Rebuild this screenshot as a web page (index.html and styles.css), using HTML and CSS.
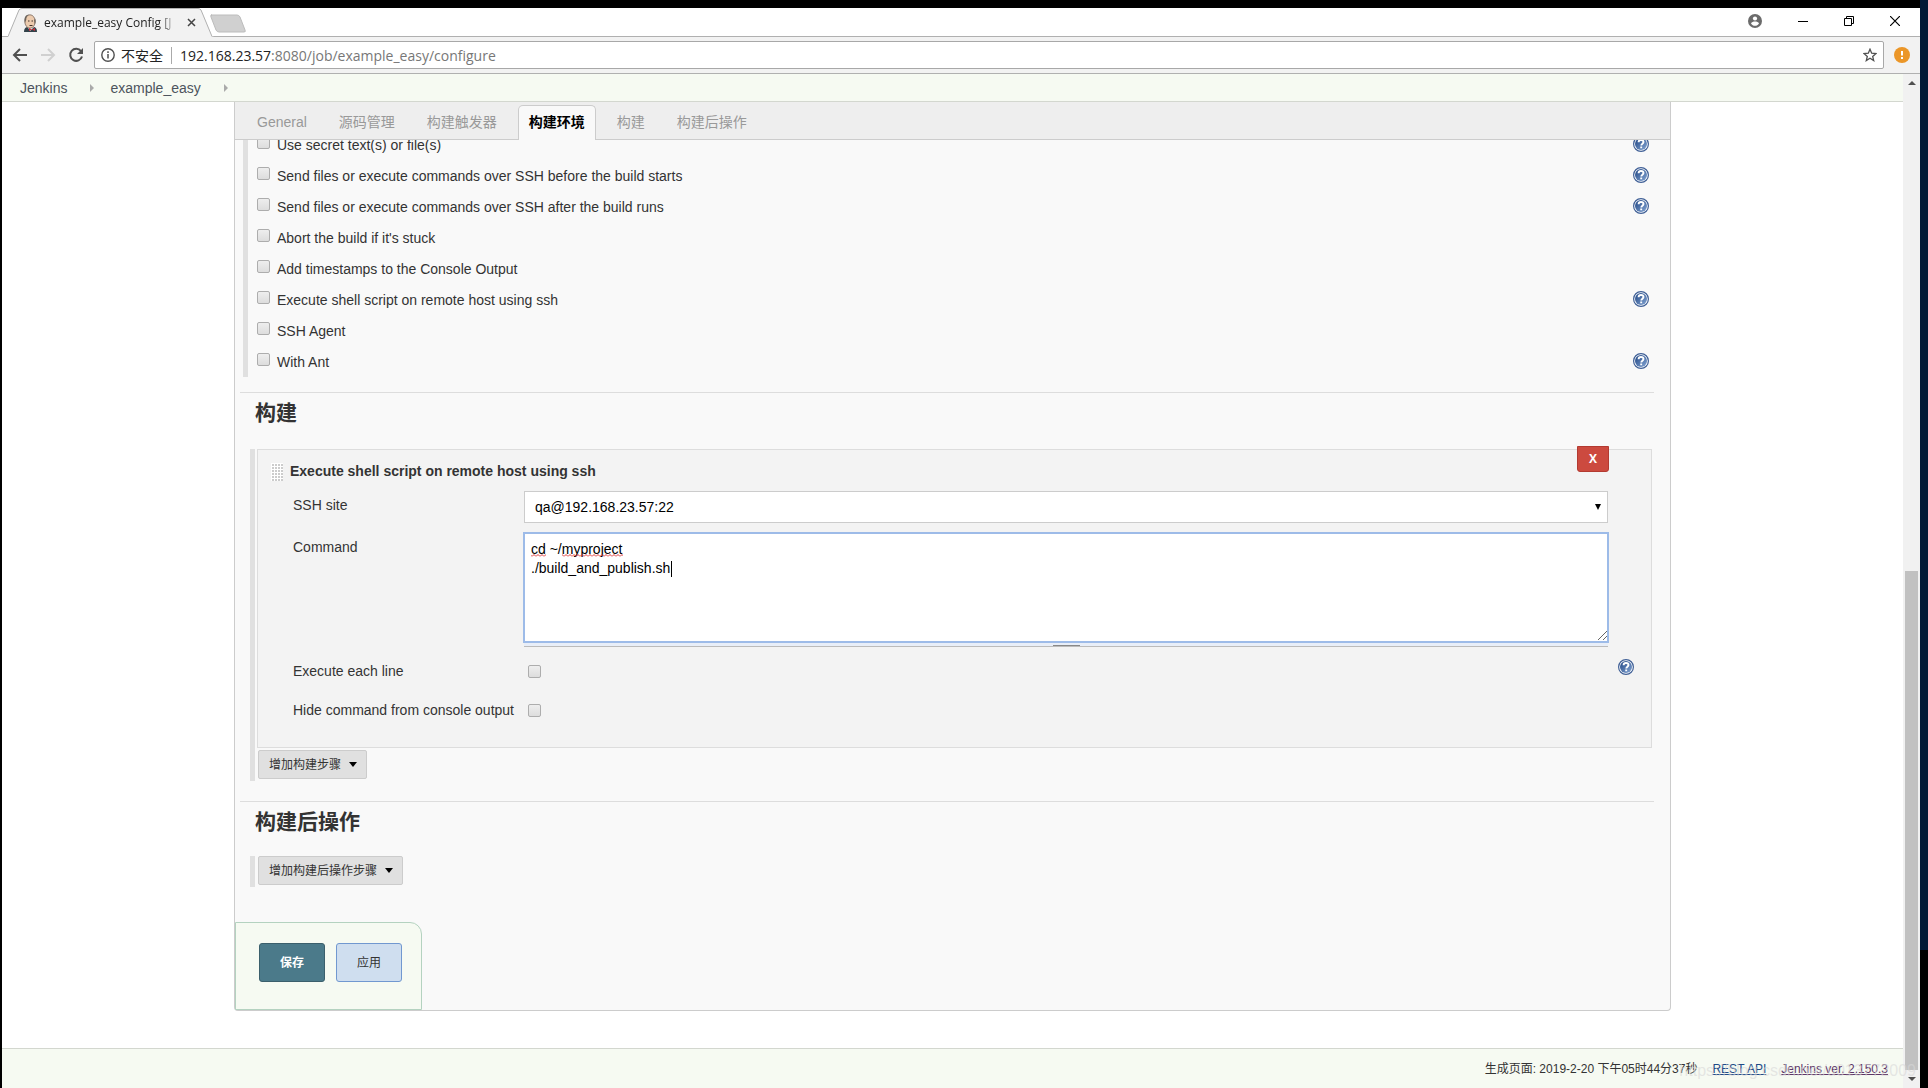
FILE: index.html
```html
<!DOCTYPE html>
<html lang="zh-CN">
<head>
<meta charset="utf-8">
<title>example_easy Config [Jenkins]</title>
<link rel="stylesheet" href="styles.css">
</head>
<body>
<svg class="defs" aria-hidden="true">
  <defs>
    <linearGradient id="help-fill" x1="0" y1="0" x2="1" y2="1">
      <stop offset="0" stop-color="#1f4583"/>
      <stop offset="1" stop-color="#85a6d4"/>
    </linearGradient>
    <pattern id="squiggle" width="4" height="3" patternUnits="userSpaceOnUse">
      <path d="M0 2.500L2 .5l2 2" fill="none" stroke="#d33"/>
    </pattern>
    <symbol id="help" viewBox="0 0 16 16">
      <circle cx="8" cy="8" r="7.4" fill="#fff" stroke="#3f5f96" stroke-width="1.2"/>
      <circle cx="8" cy="8" r="6" fill="url(#help-fill)"/>
      <path d="M5.600 6.200C5.600 4.800 6.700 4 8 4s2.500.8 2.500 2.100c0 1.500-2.200 1.700-2.200 3.300M8.200 10.500v1.800" fill="none" stroke="#fff" stroke-width="1.900"/>
    </symbol>
    <symbol id="chevron" viewBox="0 0 6 10">
      <path d="M1 1l4 4-4 4z" fill="#aaa"/>
    </symbol>
    <symbol id="caret" viewBox="0 0 8 5">
      <path d="M0 0h8L4 5z" fill="#000"/>
    </symbol>
  </defs>
</svg>
<div class="window">
  <header class="tabstrip">
    <div class="browser-tab">
      <svg class="tab-shape" viewBox="0 0 206 29" aria-hidden="true">
        <path d="M0 28.500L11 2Q12 .5 14 .5H190Q192 .5 193 2L204 28.500L206 29H0z" fill="#f2f2f2"/>
        <path d="M0 28.500L11 2Q12 .5 14 .5H190Q192 .5 193 2L204 28.500" fill="none" stroke="#b0b0b0"/>
      </svg>
      <svg class="favicon" viewBox="0 0 16 18" aria-hidden="true">
        <path d="M2 18c0-4 2-5 4-5h5c3 0 4 2 4 5z" fill="#33424a"/>
        <path d="M5 12l3 5 4-4z" fill="#fff"/>
        <ellipse cx="8" cy="7.500" rx="5.200" ry="6.700" fill="#eccbae" stroke="#7a675a" stroke-width=".8"/>
        <path d="M3 9C1.500 4 3.500.6 7.500.6c-2 1-3.500 2.400-3.200 4.900zM13 4.500c1 2 .8 4-.2 6l-.8-4z" fill="#6b635c"/>
        <path d="M6 7h1.500M9.500 7H11M7.500 11.500h3" stroke="#40302a" fill="none"/>
        <path d="M7 14l3 1.500L7 17zM13 14l-3 1.500 3 1.500z" fill="#c8313c"/>
      </svg>
      <span class="tab-title">example_easy Config [J</span>
      <button class="tab-close" aria-label="Close tab"><svg viewBox="0 0 9 9"><path d="M1 1l7 7M8 1L1 8" stroke="#444" stroke-width="1.500"/></svg></button>
    </div>
    <button class="new-tab" aria-label="New tab"><svg viewBox="0 0 36 19"><path d="M1 1h26q2 0 3 2l5 13q1 2-1 2H9q-2 0-3-2L1 3q-1-2 1-2z" fill="#d0d0d0" stroke="#bcbcbc"/></svg></button>
    <div class="window-controls">
      <svg class="account" viewBox="0 0 14 14"><circle cx="7" cy="7" r="7" fill="#6b6b6b"/><circle cx="7" cy="4.500" r="2.100" fill="#fff"/><path d="M3 9.500c.6-1.600 2.400-2 4-2s3.400.4 4 2c-1 1.500-2.400 2.300-4 2.300S4 11 3 9.500z" fill="#fff"/></svg>
      <button aria-label="Minimize"><svg viewBox="0 0 10 10"><path d="M0 5.500h10" stroke="#000"/></svg></button>
      <button aria-label="Restore"><svg viewBox="0 0 10 10"><path d="M.5 2.500h7v7h-7zM2.500 2.500v-2h7v7h-2" fill="none" stroke="#000"/></svg></button>
      <button aria-label="Close"><svg viewBox="0 0 10 10"><path d="M0 0l10 10M10 0L0 10" stroke="#000" stroke-width="1.200"/></svg></button>
    </div>
  </header>
  <nav class="toolbar" aria-label="Browser">
    <button aria-label="Back"><svg viewBox="0 0 16 16"><path d="M15 8H2M8 2L2 8l6 6" fill="none" stroke="#505050" stroke-width="2"/></svg></button>
    <button aria-label="Forward"><svg viewBox="0 0 16 16"><path d="M1 8h13M8 2l6 6-6 6" fill="none" stroke="#d0d0d0" stroke-width="2"/></svg></button>
    <button aria-label="Reload"><svg viewBox="0 0 16 16"><path d="M13 4.200A6 6 0 1 0 14 9.500" fill="none" stroke="#505050" stroke-width="2"/><path d="M15 1v6H9z" fill="#505050"/></svg></button>
    <div class="omnibox">
      <svg class="info" viewBox="0 0 14 14"><circle cx="7" cy="7" r="6.200" fill="none" stroke="#505050" stroke-width="1.400"/><path d="M7 6v4.500M7 3.300v1.600" stroke="#505050" stroke-width="1.500"/></svg>
      <span class="insecure">不安全</span>
      <span class="url"><b>192.168.23.57</b>:8080/job/example_easy/configure</span>
      <svg class="star" viewBox="0 0 14 14"><path d="M7 1.200l1.700 4 4.300.4-3.300 2.800 1 4.200L7 10.300l-3.700 2.300 1-4.200L1 5.600l4.300-.4z" fill="none" stroke="#505050" stroke-width="1.300"/></svg>
    </div>
    <svg class="alert" viewBox="0 0 16 16"><circle cx="8" cy="8" r="8" fill="#eb9628"/><path d="M8 4v4.500M8 10v2" stroke="#fff" stroke-width="2"/></svg>
  </nav>
  <div class="viewport">
    <div class="page">
      <nav class="breadcrumbs" aria-label="Breadcrumb">
        <a href="#">Jenkins</a><svg class="chevron"><use href="#chevron"/></svg>
        <a href="#">example_easy</a><svg class="chevron"><use href="#chevron"/></svg>
      </nav>
      <main class="config">
        <div class="tabs">
          <a href="#">General</a>
          <a href="#">源码管理</a>
          <a href="#">构建触发器</a>
          <a href="#" class="active">构建环境</a>
          <a href="#">构建</a>
          <a href="#">构建后操作</a>
        </div>
        <section class="environment">
          <div class="option"><label><input type="checkbox">Use secret text(s) or file(s)</label><svg class="help"><use href="#help"/></svg></div>
          <div class="option"><label><input type="checkbox">Send files or execute commands over SSH before the build starts</label><svg class="help"><use href="#help"/></svg></div>
          <div class="option"><label><input type="checkbox">Send files or execute commands over SSH after the build runs</label><svg class="help"><use href="#help"/></svg></div>
          <div class="option"><label><input type="checkbox">Abort the build if it's stuck</label></div>
          <div class="option"><label><input type="checkbox">Add timestamps to the Console Output</label></div>
          <div class="option"><label><input type="checkbox">Execute shell script on remote host using ssh</label><svg class="help"><use href="#help"/></svg></div>
          <div class="option"><label><input type="checkbox">SSH Agent</label></div>
          <div class="option"><label><input type="checkbox">With Ant</label><svg class="help"><use href="#help"/></svg></div>
        </section>
        <section class="section build">
          <h2>构建</h2>
          <div class="steps">
            <div class="step">
              <button class="delete">X</button>
              <h3><span class="handle"></span>Execute shell script on remote host using ssh</h3>
              <div class="field">
                <label for="site">SSH site</label>
                <div class="select-wrap">
                  <select id="site"><option>qa@192.168.23.57:22</option></select>
                  <svg class="select-arrow" viewBox="0 0 6 6"><path d="M0 0h6L3 6z"/></svg>
                </div>
              </div>
              <div class="field">
                <label for="command">Command</label>
                <div class="editor">
                  <textarea class="command" id="command" spellcheck="false">cd ~/myproject
./build_and_publish.sh</textarea>
                  <svg class="marks" viewBox="0 0 160 50" aria-hidden="true">
                    <path d="M7 21h15v3H7zM38 21h61v3H38z" fill="url(#squiggle)"/>
                    <path d="M147 28h1v16h-1z"/>
                  </svg>
                  <svg class="grip" viewBox="0 0 9 9"><path d="M0 9l9-9M5 9l4-4" stroke="#666"/></svg>
                  <div class="resizer"><span></span></div>
                </div>
              </div>
              <div class="field check">
                <label for="each">Execute each line</label>
                <input type="checkbox" id="each">
                <svg class="help"><use href="#help"/></svg>
              </div>
              <div class="field check">
                <label for="hide">Hide command from console output</label>
                <input type="checkbox" id="hide">
              </div>
            </div>
            <button class="add">增加构建步骤<svg class="caret"><use href="#caret"/></svg></button>
          </div>
        </section>
        <section class="section">
          <h2>构建后操作</h2>
          <div class="steps">
            <button class="add">增加构建后操作步骤<svg class="caret"><use href="#caret"/></svg></button>
          </div>
        </section>
        <div class="actions">
          <button class="save">保存</button>
          <button class="apply">应用</button>
        </div>
      </main>
      <footer class="footer">
        <span>生成页面: 2019-2-20 下午05时44分37秒</span>
        <a href="#">REST API</a>
        <a href="#" class="visited">Jenkins ver. 2.150.3</a>
      </footer>
    </div>
    <div class="scrollbar">
      <svg viewBox="0 0 8 4"><path d="M0 4h8L4 0z" fill="#505050"/></svg>
      <div class="track"><div class="thumb"></div></div>
      <svg viewBox="0 0 8 4"><path d="M0 0h8L4 4z" fill="#505050"/></svg>
    </div>
  </div>
  <div class="watermark">https://blog.csdn.net/u013772009</div>
</div>
</body>
</html>
```
FILE: styles.css
```css
* { box-sizing: border-box; }

html, body { height: 100%; }

body {
  margin: 0;
  padding: 8px 8px 0 2px;
  background: linear-gradient(to left, #021a36 8px, #000 8px) no-repeat 0 0 / 100% 950px, #000;
  color: #333;
  font: 14px/19px "Liberation Sans", "Noto Sans CJK SC", sans-serif;
}

button { padding: 0; border: 0; background: none; font-family: inherit; }
button svg { display: block; }
svg { flex: none; }
.defs { position: absolute; width: 0; height: 0; }

.window {
  position: relative;
  display: flex;
  flex-direction: column;
  min-height: 100%;
  background: #fff;
}

/* Browser chrome */
.tabstrip {
  display: flex;
  height: 29px;
  padding-left: 6px;
  border-bottom: 1px solid #b0b0b0;
  background: #fff;
  font-family: "Open Sans", sans-serif;
}
.browser-tab {
  position: relative;
  display: flex;
  align-items: center;
  width: 206px;
  height: 29px;
  padding: 0 18px 0 14px;
}
.tab-shape { position: absolute; inset: 0; width: 206px; height: 29px; }
.favicon { position: relative; width: 16px; height: 18px; }
.tab-title {
  position: relative;
  flex: 1;
  margin-left: 6px;
  overflow: hidden;
  color: #222;
  font-size: 12px;
  white-space: nowrap;
  -webkit-mask-image: linear-gradient(to left, transparent, #000 18px);
  mask-image: linear-gradient(to left, transparent, #000 18px);
}
.tab-close { position: relative; width: 9px; margin-left: 10px; }
.new-tab { width: 36px; margin: 2px 0 0 -4px; }
.window-controls { display: flex; align-items: center; gap: 36px; margin-left: auto; padding: 0 20px 2px 0; }
.window-controls button { width: 10px; }
.window-controls .account { width: 14px; height: 14px; }

.toolbar {
  display: flex;
  align-items: center;
  gap: 12px;
  height: 37px;
  padding: 0 10px;
  border-bottom: 1px solid #b0b0b0;
  background: #f2f2f2;
}
.toolbar button { width: 16px; }
.omnibox {
  display: flex;
  flex: 1;
  align-items: center;
  height: 28px;
  margin: 0 -2px;
  padding: 0 6px;
  border: 1px solid #a8a8a8;
  border-radius: 2px;
  background: #fff;
  font-family: "Open Sans", "Noto Sans CJK SC", sans-serif;
}
.info { width: 14px; height: 14px; }
.insecure { margin-left: 6px; padding-right: 8px; border-right: 1px solid #aaa; color: #222; line-height: 17px; }
.url { flex: 1; margin-left: 8px; color: #777; }
.url b { color: #222; font-weight: 400; }
.star { width: 14px; height: 14px; }
.alert { width: 16px; height: 16px; }

.viewport { display: flex; flex: 1; }
.page { display: flex; flex: 1; flex-direction: column; }

.breadcrumbs {
  display: flex;
  align-items: center;
  height: 28px;
  padding: 1px 0 0 18px;
  border-bottom: 1px solid #d3d7cf;
  background: #f6faf2;
}
.breadcrumbs a { color: #4d545d; text-decoration: none; }
.chevron { width: 6px; height: 10px; margin: 0 15px 0 22px; }

/* Configuration form */
.config {
  display: flex;
  flex-direction: column;
  margin: 0 232px;
  border: 1px solid #ccc;
  border-top: 0;
  border-radius: 0 0 4px 4px;
  background: #f9f9f9;
}
.tabs {
  z-index: 1;
  display: flex;
  align-items: flex-end;
  gap: 10px;
  height: 38px;
  padding-left: 11px;
  border-bottom: 1px solid #ccc;
  background: #eee;
}
.tabs a {
  height: 35px;
  margin-bottom: -1px;
  padding: 0 10px;
  border: 1px solid transparent;
  border-bottom: 0;
  border-radius: 5px 5px 0 0;
  color: #999;
  line-height: 32px;
  text-decoration: none;
}
.tabs .active { border-color: #ccc; background: #f9f9f9; color: #000; font-weight: 700; }

.environment {
  margin: -11px 21px 15px 8px;
  border-left: 5px solid #e0e0e0;
  padding-left: 9px;
}
.option { display: flex; align-items: center; justify-content: space-between; height: 31px; }
.option label { display: flex; gap: 7px; padding-top: 1px; }
.option .help { margin-bottom: 2px; }

input[type="checkbox"] {
  appearance: none;
  flex: none;
  width: 13px;
  height: 13px;
  margin: 0;
  border: 1px solid #adadad;
  border-radius: 2px;
  background: linear-gradient(#eee, #ddd);
}
.help { width: 16px; height: 16px; }

.section { margin: 0 16px 20px 5px; padding: 7px 2px 0 10px; border-top: 1px solid #ddd; }
h2 { margin: 0 0 22px; padding-left: 5px; font-size: 21px; line-height: 25px; }
.build h2 { margin-bottom: 24px; }
.steps { padding: 0 0 2px 2px; border-left: 5px solid #e0e0e0; }
.step {
  position: relative;
  display: flex;
  flex-direction: column;
  margin-bottom: 2px;
  padding: 12px 43px 12px 13px;
  border: 1px solid #ddd;
  background: #f3f3f3;
}
h3 { display: flex; align-items: center; gap: 7px; margin: 0 0 10px; font-size: 14px; line-height: 19px; }
.handle {
  width: 12px;
  height: 18px;
  background:
    linear-gradient(#fff 1px, transparent 1px) 0 0 / 3px 3px,
    linear-gradient(to right, #fff 1px, #ccc 1px) 0 0 / 3px 3px;
}
.delete {
  position: absolute;
  top: -4px;
  right: 42px;
  width: 32px;
  height: 26px;
  border: 1px solid #b33a31;
  border-radius: 0 0 3px 3px;
  background: #cc4a3f;
  color: #fff;
  font: 700 12px/20px "Open Sans", sans-serif;
}
.field { display: flex; margin: 0 0 10px 22px; }
.field > label { flex: none; width: 231px; padding-top: 5px; }
.select-wrap { position: relative; flex: 1; }
select, .command { width: 100%; background: #fff; color: #000; font: inherit; }
select {
  display: block;
  height: 32px;
  padding: 0 10px;
  border: 1px solid #ccc;
  border-radius: 0;
  appearance: none;
}
.select-arrow { position: absolute; top: 13px; right: 7px; width: 6px; height: 6px; }
.editor { position: relative; flex: 1; }
.command {
  display: block;
  height: 109px;
  margin: 0;
  padding: 7px;
  border: 0;
  outline: 2px solid #9dbbe8;
  outline-offset: -1px;
  resize: none;
}
.marks { position: absolute; top: 0; left: 0; width: 160px; height: 50px; pointer-events: none; }
.grip { position: absolute; top: 98px; right: 1px; width: 9px; height: 9px; }
.resizer {
  display: flex;
  align-items: flex-end;
  justify-content: center;
  height: 5px;
  border-bottom: 1px solid #bbb;
  background: #e8eef8;
}
.resizer span { width: 27px; height: 4px; border: solid #888; border-width: 1px 0; }
.check { align-items: center; height: 29px; }
.check > label { padding: 0; }
.check input { margin-left: 4px; }
.check .help { align-self: flex-start; margin: 2px -26px 0 auto; }

.add {
  display: flex;
  align-items: center;
  gap: 8px;
  height: 29px;
  margin-left: 1px;
  padding: 0 9px 2px 10px;
  border: 1px solid #ccc;
  border-radius: 2px;
  background: #e0e0e0;
  color: #333;
  font-size: 12px;
}
.caret { width: 8px; height: 5px; margin-top: 2px; }
.actions {
  display: flex;
  gap: 11px;
  align-self: flex-start;
  margin-top: 15px;
  padding: 20px 19px 27px 23px;
  border: 1px solid #b4d2c0;
  border-radius: 0 12px 0 0;
  background: #f6faf2;
}
.actions button { width: 66px; height: 39px; padding-bottom: 2px; border: 1px solid #3b5f6c; border-radius: 3px; font-size: 12px; }
.actions .save { background: #4b7a8a; color: #fff; font-weight: 700; }
.actions .apply { border-color: #7198d0; background: #cfdeef; color: #333; }

.footer {
  display: flex;
  flex: 1;
  justify-content: flex-end;
  gap: 15px;
  margin-top: 37px;
  padding: 11px 15px 0 0;
  border-top: 1px solid #d3d7cf;
  background: #f6faf2;
  font-size: 12px;
}
.footer a { color: #204a87; }
.footer .visited { color: #5c3566; }

.scrollbar {
  display: flex;
  flex-direction: column;
  align-items: center;
  width: 17px;
  padding: 7px 2px;
  background: #f1f1f1;
}
.scrollbar svg { width: 8px; height: 4px; }
.track { display: flex; flex: 1; align-items: flex-end; width: 13px; padding: 7px 0; }
.thumb { width: 100%; height: 51%; background: #c1c1c1; }

.watermark {
  position: absolute;
  right: 4px;
  bottom: 8px;
  color: rgba(216, 216, 216, 0.6);
  font-size: 16px;
}
```
